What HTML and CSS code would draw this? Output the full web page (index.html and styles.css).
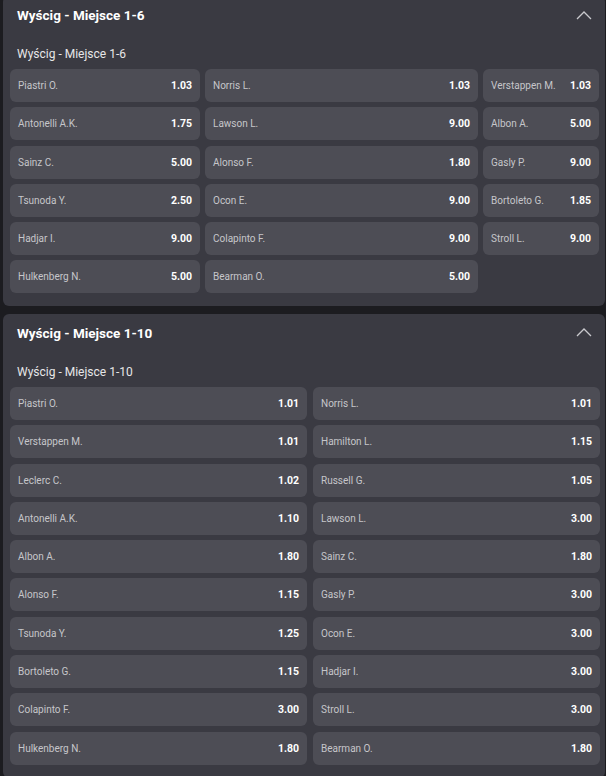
FILE: index.html
```html
<!DOCTYPE html>
<html lang="pl">
<head>
    <meta charset="UTF-8">
    <meta name="viewport" content="width=device-width, initial-scale=1.0">
    <title>Wyścig - Miejsce</title>
    <link rel="stylesheet" href="styles.css">
</head>
<body>

    <!-- Miejsce 1-6 -->
    <div class="market first">
        <div class="market-header">
            <span class="market-title">Wyścig - Miejsce 1-6</span>
            <svg class="chevron" width="16" height="9" viewBox="0 0 16 9"><polyline points="1,8 8,1 15,8" fill="none" stroke="#c9c9cd" stroke-width="1.3"/></svg>
        </div>
        <div class="market-sub">Wyścig - Miejsce 1-6</div>
        <div class="odds-grid three">
            <div class="cell"><span class="name">Piastri O.</span><span class="odd">1.03</span></div>
            <div class="cell"><span class="name">Norris L.</span><span class="odd">1.03</span></div>
            <div class="cell"><span class="name">Verstappen M.</span><span class="odd">1.03</span></div>
            <div class="cell"><span class="name">Antonelli A.K.</span><span class="odd">1.75</span></div>
            <div class="cell"><span class="name">Lawson L.</span><span class="odd">9.00</span></div>
            <div class="cell"><span class="name">Albon A.</span><span class="odd">5.00</span></div>
            <div class="cell"><span class="name">Sainz C.</span><span class="odd">5.00</span></div>
            <div class="cell"><span class="name">Alonso F.</span><span class="odd">1.80</span></div>
            <div class="cell"><span class="name">Gasly P.</span><span class="odd">9.00</span></div>
            <div class="cell"><span class="name">Tsunoda Y.</span><span class="odd">2.50</span></div>
            <div class="cell"><span class="name">Ocon E.</span><span class="odd">9.00</span></div>
            <div class="cell"><span class="name">Bortoleto G.</span><span class="odd">1.85</span></div>
            <div class="cell"><span class="name">Hadjar I.</span><span class="odd">9.00</span></div>
            <div class="cell"><span class="name">Colapinto F.</span><span class="odd">9.00</span></div>
            <div class="cell"><span class="name">Stroll L.</span><span class="odd">9.00</span></div>
            <div class="cell"><span class="name">Hulkenberg N.</span><span class="odd">5.00</span></div>
            <div class="cell"><span class="name">Bearman O.</span><span class="odd">5.00</span></div>
        </div>
    </div>

    <!-- Miejsce 1-10 -->
    <div class="market">
        <div class="market-header">
            <span class="market-title">Wyścig - Miejsce 1-10</span>
            <svg class="chevron" width="16" height="9" viewBox="0 0 16 9"><polyline points="1,8 8,1 15,8" fill="none" stroke="#c9c9cd" stroke-width="1.3"/></svg>
        </div>
        <div class="market-sub">Wyścig - Miejsce 1-10</div>
        <div class="odds-grid two">
            <div class="cell"><span class="name">Piastri O.</span><span class="odd">1.01</span></div>
            <div class="cell"><span class="name">Norris L.</span><span class="odd">1.01</span></div>
            <div class="cell"><span class="name">Verstappen M.</span><span class="odd">1.01</span></div>
            <div class="cell"><span class="name">Hamilton L.</span><span class="odd">1.15</span></div>
            <div class="cell"><span class="name">Leclerc C.</span><span class="odd">1.02</span></div>
            <div class="cell"><span class="name">Russell G.</span><span class="odd">1.05</span></div>
            <div class="cell"><span class="name">Antonelli A.K.</span><span class="odd">1.10</span></div>
            <div class="cell"><span class="name">Lawson L.</span><span class="odd">3.00</span></div>
            <div class="cell"><span class="name">Albon A.</span><span class="odd">1.80</span></div>
            <div class="cell"><span class="name">Sainz C.</span><span class="odd">1.80</span></div>
            <div class="cell"><span class="name">Alonso F.</span><span class="odd">1.15</span></div>
            <div class="cell"><span class="name">Gasly P.</span><span class="odd">3.00</span></div>
            <div class="cell"><span class="name">Tsunoda Y.</span><span class="odd">1.25</span></div>
            <div class="cell"><span class="name">Ocon E.</span><span class="odd">3.00</span></div>
            <div class="cell"><span class="name">Bortoleto G.</span><span class="odd">1.15</span></div>
            <div class="cell"><span class="name">Hadjar I.</span><span class="odd">3.00</span></div>
            <div class="cell"><span class="name">Colapinto F.</span><span class="odd">3.00</span></div>
            <div class="cell"><span class="name">Stroll L.</span><span class="odd">3.00</span></div>
            <div class="cell"><span class="name">Hulkenberg N.</span><span class="odd">1.80</span></div>
            <div class="cell"><span class="name">Bearman O.</span><span class="odd">1.80</span></div>
        </div>
    </div>

</body>
</html>
```

FILE: styles.css
```css
html, body {
    background: #1c1c20;
}
body {
    font-family: Roboto, "Liberation Sans", sans-serif;
    margin: 0;
    padding: 0 1px 0 3px;
    overflow: hidden;
}
.market {
    background: #3a3a42;
    border-radius: 6px;
    padding: 0 0 13px 7px;
    margin-bottom: 7.5px;
}
.market.first {
    margin-top: -4px;
}
.market-header {
    height: 38px;
    display: flex;
    align-items: center;
    justify-content: space-between;
    padding: 0 13px 0 7px;
}
.market-title {
    color: #fff;
    font-size: 13.5px;
    font-weight: 700;
}
.chevron {
    display: block;
}
.market-sub {
    color: #e6e6e8;
    font-size: 12px;
    line-height: 16px;
    padding: 12px 0 7px 7px;
}
.odds-grid {
    display: grid;
    grid-auto-rows: 33px;
    row-gap: 5.3px;
}
.odds-grid.three {
    grid-template-columns: 190px 273px 116px;
    column-gap: 5px;
}
.odds-grid.two {
    grid-template-columns: 297px 287px;
    column-gap: 6px;
}
.cell {
    background: #4d4d55;
    border-radius: 6px;
    display: flex;
    align-items: center;
    justify-content: space-between;
    padding: 0 8px;
}
.name {
    color: #c6c6ca;
    font-size: 10px;
    white-space: nowrap;
}
.odd {
    color: #fff;
    font-size: 10.5px;
    font-weight: 700;
}
```
